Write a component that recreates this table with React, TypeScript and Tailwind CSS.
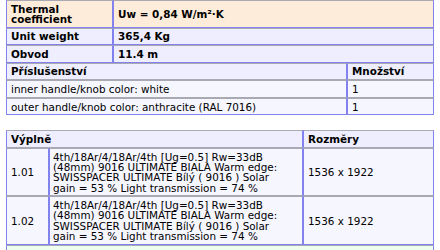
import React from 'react';

const cell = 'border border-[#8282ee] border-t-[#a9a9b4] px-[4px] py-[2.6px]';

const accessories = [
  { name: 'inner handle/knob color: white', qty: '1' },
  { name: 'outer handle/knob color: anthracite (RAL 7016)', qty: '1' },
];

const glazing = [
  {
    pos: '1.01',
    desc: '4th/18Ar/4/18Ar/4th [Ug=0.5] Rw=33dB (48mm) 9016 ULTIMATE BIALA Warm edge: SWISSPACER ULTIMATE Bílý ( 9016 ) Solar gain = 53 % Light transmission = 74 %',
    size: '1536 x 1922',
  },
  {
    pos: '1.02',
    desc: '4th/18Ar/4/18Ar/4th [Ug=0.5] Rw=33dB (48mm) 9016 ULTIMATE BIALA Warm edge: SWISSPACER ULTIMATE Bílý ( 9016 ) Solar gain = 53 % Light transmission = 74 %',
    size: '1536 x 1922',
  },
];

const App: React.FC = () => {
  return (
    <div
      className="w-[440px] h-[250px] overflow-hidden bg-white text-black text-[10.4px] leading-[10.33px]"
      style={{ fontFamily: '"DejaVu Sans", Verdana, sans-serif' }}
    >
      <div className="ml-[6px] w-[428px] flex flex-col">
        {/* Parameters */}
        <div className="flex bg-[#feecdb] font-bold">
          <div className={`${cell} w-[107px]`}>Thermal coefficient</div>
          <div className={`${cell} flex-1 flex items-center`}>Uw = 0,84 W/m²·K</div>
        </div>
        <div className="flex bg-[#eeeefe] font-bold">
          <div className={`${cell} w-[107px]`}>Unit weight</div>
          <div className={`${cell} flex-1`}>365,4 Kg</div>
        </div>
        <div className="flex bg-[#eeeefe] font-bold">
          <div className={`${cell} w-[107px]`}>Obvod</div>
          <div className={`${cell} flex-1`}>11.4 m</div>
        </div>

        {/* Accessories */}
        <div className="flex bg-[#eeeefe] font-bold">
          <div className={`${cell} border-b-[#a9a9b4] w-[341px]`}>Příslušenství</div>
          <div className={`${cell} border-b-[#a9a9b4] flex-1`}>Množství</div>
        </div>
        {accessories.map((a, i) => (
          <div key={a.name} className="flex bg-[#f6f6ff]">
            <div className={`${cell} ${i < accessories.length - 1 ? 'border-b-[#a9a9b4]' : ''} w-[341px]`}>{a.name}</div>
            <div className={`${cell} ${i < accessories.length - 1 ? 'border-b-[#a9a9b4]' : ''} flex-1`}>{a.qty}</div>
          </div>
        ))}
      </div>

      {/* Glazing */}
      <div className="ml-[6px] mt-[15px] w-[428px] flex flex-col">
        <div className="flex bg-[#eeeefe] font-bold">
          <div className={`${cell} border-b-[#a9a9b4] w-[297px]`}>Výplně</div>
          <div className={`${cell} border-b-[#a9a9b4] flex-1`}>Rozměry</div>
        </div>
        {glazing.map((g, i) => (
          <div key={g.pos} className="flex bg-[#f6f6ff]">
            <div className={`${cell} ${i < glazing.length - 1 ? 'border-b-[#a9a9b4]' : ''} w-[43px] flex items-center`}>{g.pos}</div>
            <div className={`${cell} ${i < glazing.length - 1 ? 'border-b-[#a9a9b4]' : ''} w-[254px] pl-[3px] pr-[10px]`}>{g.desc}</div>
            <div className={`${cell} ${i < glazing.length - 1 ? 'border-b-[#a9a9b4]' : ''} flex-1 flex items-center`}>{g.size}</div>
          </div>
        ))}
        <div className="flex bg-[#eefeee]">
          <div className={`${cell} flex-1 h-[17px]`}></div>
        </div>
      </div>
    </div>
  );
};

export default App;
